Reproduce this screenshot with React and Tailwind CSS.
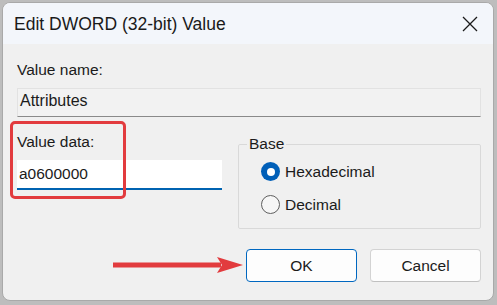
import React from "react";

const font = { fontFamily: '"Liberation Sans", Arial, sans-serif' };

function Radio({ checked, label }) {
  return (
    <div className="flex items-center h-[19px] gap-[5px]">
      {checked ? (
        <div className="w-[19px] h-[19px] rounded-full bg-[#005fb8] flex items-center justify-center">
          <div className="w-[8px] h-[8px] rounded-full bg-white" />
        </div>
      ) : (
        <div className="w-[19px] h-[19px] rounded-full border border-[#5f5f5f] bg-[#f6f6f6]" />
      )}
      <span className="text-[15.5px] leading-[18px] text-[#1b1b1b]">{label}</span>
    </div>
  );
}

export default function App() {
  return (
    <div
      className="relative w-[497px] h-[305px] bg-[#bdbdbd] pt-[2px] pl-[2px] overflow-hidden"
      style={font}
    >
      <div className="w-[492px] h-[299px] rounded-[8px] bg-[#f0f0f0] overflow-hidden flex flex-col border border-[#a9a9a9]">
        {/* title bar */}
        <div className="h-[41px] bg-[#f3f6fb] flex items-center justify-between pl-[11px] pr-[15px]">
          <span className="text-[17.5px] leading-[22px] text-[#1a1a1a]">Edit DWORD (32-bit) Value</span>
          <svg width="16" height="16" viewBox="0 0 16 16" className="mt-[1px]">
            <path d="M1 1 L15 15 M15 1 L1 15" stroke="#1a1a1a" strokeWidth="1.3" />
          </svg>
        </div>

        {/* body */}
        <div className="flex flex-col pl-[14px] pr-[12px] pt-[17px]">
          <div className="text-[15.5px] leading-[18px] text-[#1b1b1b]">Value name:</div>
          <div className="mt-[9px] h-[29px] border border-[#e2e2e2] border-b-[#8a8a8a] bg-[#f2f2f2] flex items-center pl-[2px] pb-[3px]">
            <span className="text-[16px] leading-[18px] text-[#1b1b1b]">Attributes</span>
          </div>

          <div className="flex mt-[16px]">
            <div className="w-[205px] flex flex-col">
              <div className="text-[15.5px] leading-[18px] text-[#1b1b1b]">Value data:</div>
              <div className="mt-[9px] h-[30px] bg-white border-b-2 border-[#0063b1] flex items-center pl-[2px]">
                <span className="text-[15.5px] leading-[18px] text-[#1b1b1b]">a0600000</span>
              </div>
            </div>
            <fieldset className="ml-[16px] flex-1 border border-[#d9d9d9] rounded-[2px] px-[8px] pb-[14px] h-[96px]">
              <legend className="px-[2px] text-[15.5px] leading-[22px] text-[#1b1b1b]">Base</legend>
              <div className="flex flex-col gap-[14px] ml-[14px] mt-[7px]">
                <Radio checked label="Hexadecimal" />
                <Radio label="Decimal" />
              </div>
            </fieldset>
          </div>

          <div className="flex justify-end gap-[13px] mt-[20px]">
            <button className="w-[111px] h-[33px] rounded-[4px] border border-[#0067c0] bg-[#fdfdfd] text-[15.5px] text-[#1b1b1b]">
              OK
            </button>
            <button className="w-[111px] h-[33px] rounded-[4px] border border-[#d3d3d3] border-b-[#c0c0c0] bg-[#fdfdfd] text-[15.5px] text-[#1b1b1b]">
              Cancel
            </button>
          </div>
        </div>
      </div>

      {/* red highlight box */}
      <div className="absolute left-[10px] top-[121px] w-[116px] h-[78px] border-[3px] border-[#e23b3e] rounded-[5px]" />

      {/* red arrow */}
      <svg className="absolute left-[112px] top-[255px]" width="132" height="20" viewBox="0 0 132 20">
        <rect x="1" y="7.5" width="108" height="5" fill="#e23b3e" />
        <path d="M105 2 L131 10 L105 18 L110 10 Z" fill="#e23b3e" />
      </svg>
    </div>
  );
}
